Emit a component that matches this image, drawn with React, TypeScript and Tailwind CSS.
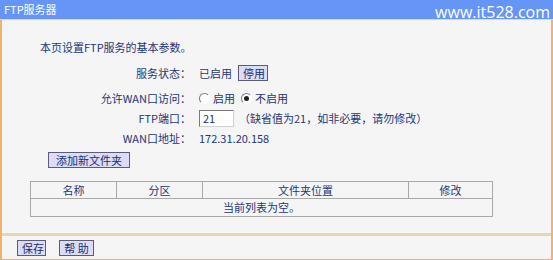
const font = { fontFamily: '"SimSun","Noto Sans CJK SC",sans-serif' };

function Btn({ children, className = "" }: { children: React.ReactNode; className?: string }) {
  return (
    <button
      type="button"
      className={`h-[16px] whitespace-nowrap border border-[#5a5a7a] bg-[#dcdcf6] px-[4px] text-[11px] leading-[14px] text-[#1a2f6e] ${className}`}
    >
      {children}
    </button>
  );
}

function Row({ label, children }: { label: string; children: React.ReactNode }) {
  return (
    <div className="flex h-[20px] items-center">
      <div className="w-[189px] text-right">{label}</div>
      <div className="flex items-center pl-[8px]">{children}</div>
    </div>
  );
}

function Radio({ checked }: { checked?: boolean }) {
  return (
    <span className="mr-[3px] inline-flex h-[11px] w-[11px] items-center justify-center rounded-full border border-[#7a7a7a] border-b-white border-r-white bg-white">
      {checked && <span className="h-[5px] w-[5px] rounded-full bg-[#222]" />}
    </span>
  );
}

export default function App() {
  return (
    <div className="h-[260px] w-[553px] bg-white text-[11px] text-[#1f3579]" style={font}>
      <div className="flex h-[19px] items-center justify-between bg-[#6495f7] pl-[4px] pr-[3px] text-white">
        <span className="text-[11px]">FTP服务器</span>
        <span className="mt-[4px] text-[16px] leading-[16px]" style={{ fontFamily: '"Open Sans",sans-serif' }}>
          www.it528.com
        </span>
      </div>
      <div className="h-[1px] bg-[#c9dafb]" />
      <div className="h-[213px] border-l-[2px] border-r-[2px] border-[#f1b26c] bg-[#f5f5f5] pt-[19px]">
        <div className="pl-[38px] leading-[16px]">本页设置FTP服务的基本参数。</div>
        <div className="mt-[8px]">
          <Row label="服务状态：">
            <span>已启用</span>
            <Btn className="ml-[6px] w-[30px]">停用</Btn>
          </Row>
          <div className="h-[5px]" />
          <Row label="允许WAN口访问：">
            <Radio />
            <span>启用</span>
            <span className="ml-[6px]" />
            <Radio checked />
            <span>不启用</span>
          </Row>
          <Row label="FTP端口：">
            <input
              readOnly
              value="21"
              className="h-[17px] w-[35px] border border-[#7a7a7a] border-b-[#d0d0d0] border-r-[#d0d0d0] bg-white px-[3px] text-[11px] text-[#1f3579] outline-none"
            />
            <span className="ml-[5px]">（缺省值为21，如非必要，请勿修改）</span>
          </Row>
          <Row label="WAN口地址：">
            <span>172.31.20.158</span>
          </Row>
        </div>
        <div className="mt-[4px] pl-[46px]">
          <Btn className="w-[82px]">添加新文件夹</Btn>
        </div>
        <table className="ml-[28px] mt-[12px] w-[463px] border-collapse border border-[#9a9a9a] text-center">
          <tbody>
            <tr className="h-[16px]">
              <td className="w-[86px] border border-[#a8a8a8]">名称</td>
              <td className="w-[86px] border border-[#a8a8a8]">分区</td>
              <td className="w-[206px] border border-[#a8a8a8]">文件夹位置</td>
              <td className="border border-[#a8a8a8]">修改</td>
            </tr>
            <tr className="h-[16px]">
              <td colSpan={4} className="border border-[#a8a8a8]">
                当前列表为空。
              </td>
            </tr>
          </tbody>
        </table>
      </div>
      <div className="h-[3px] border-l-[2px] border-r-[2px] border-[#f1b26c] bg-[#e6d7b4]" />
      <div className="flex h-[25px] items-center gap-[13px] border-b-[2px] border-l-[2px] border-r-[2px] border-[#f1b26c] bg-[#f5f5f5] pl-[15px]">
        <Btn className="w-[29px] px-0">保存</Btn>
        <Btn className="w-[35px] px-0">帮 助</Btn>
      </div>
    </div>
  );
}
